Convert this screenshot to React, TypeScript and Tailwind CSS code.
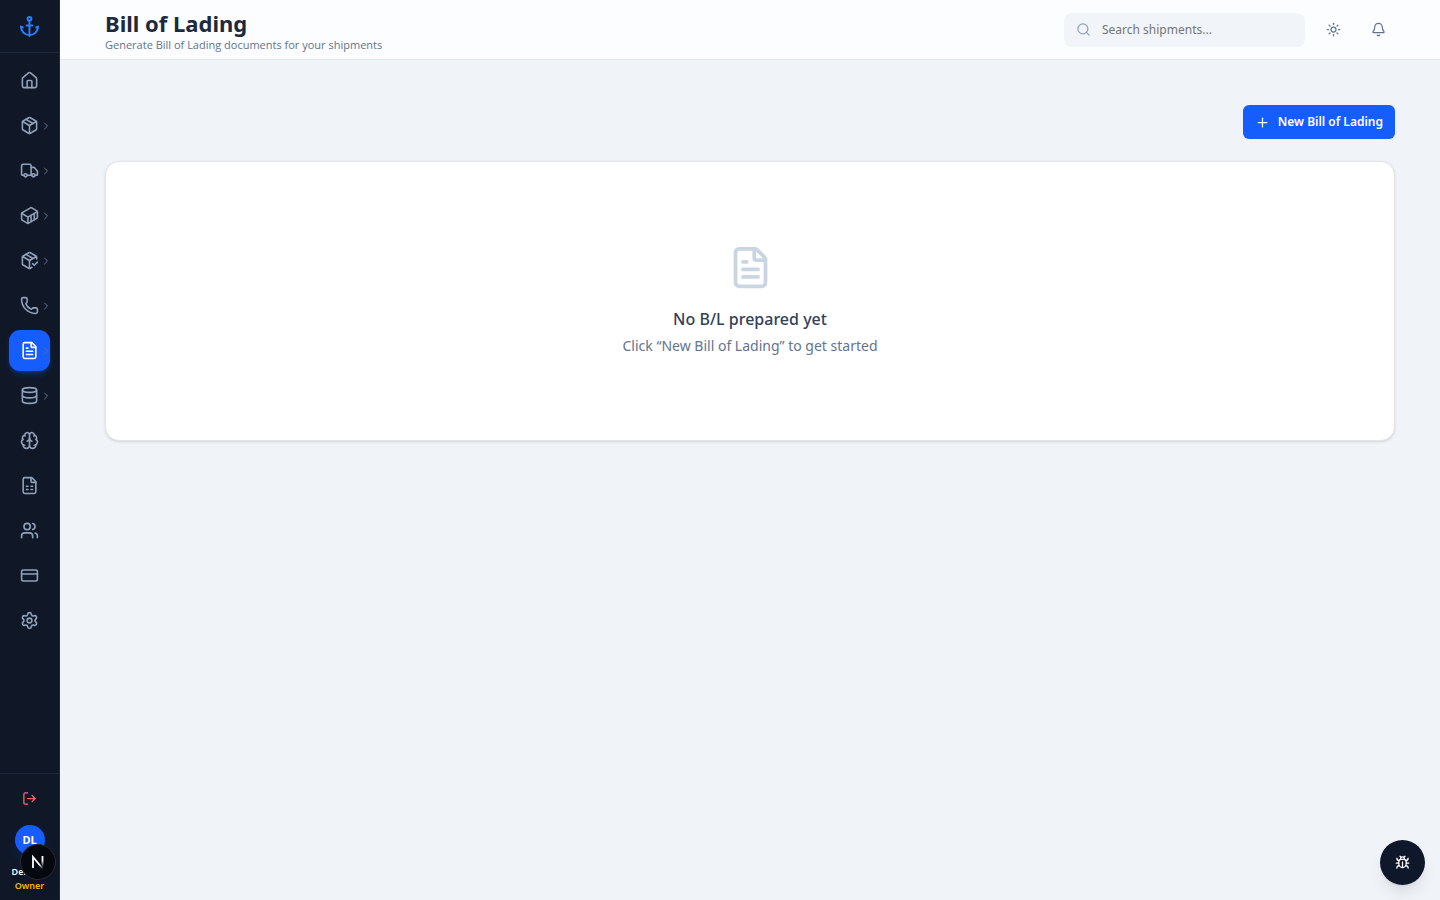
import {
    Anchor, Bell, Brain, Bug, ChevronRight, Container, CreditCard, Database, FileSpreadsheet, FileText, House,
    LogOut, Package, PackageCheck, Phone, Plus, Search, Settings, Sun, Truck, Users, type LucideIcon,
} from "lucide-react";
import React from "react";

interface NavItem {
    label: string;
    icon: LucideIcon;
    hasChildren?: boolean;
    active?: boolean;
}

const navItems: NavItem[] = [
    { label: "Dashboard", icon: House },
    { label: "Shipments", icon: Package, hasChildren: true },
    { label: "Transport", icon: Truck, hasChildren: true },
    { label: "Containers", icon: Container, hasChildren: true },
    { label: "Deliveries", icon: PackageCheck, hasChildren: true },
    { label: "Contacts", icon: Phone, hasChildren: true },
    { label: "Documents", icon: FileText, hasChildren: true, active: true },
    { label: "Master data", icon: Database, hasChildren: true },
    { label: "Assistant", icon: Brain },
    { label: "Reports", icon: FileSpreadsheet },
    { label: "Team", icon: Users },
    { label: "Billing", icon: CreditCard },
    { label: "Settings", icon: Settings },
];

function NavLink({ label, icon: Icon, hasChildren, active }: NavItem) {
    return (
        <a
            href="#"
            aria-label={label}
            aria-current={active ? "page" : undefined}
            className={`relative flex h-[41px] items-center justify-center rounded-[11px] ${active ? "bg-[#155dfc] text-white shadow-md shadow-blue-600/30" : "text-[#90a1b9] hover:bg-slate-800"}`}
        >
            <Icon size={19} />
            {hasChildren && <ChevronRight size={12} className="absolute -right-0.5 text-[#62748e]" />}
        </a>
    );
}

function Sidebar() {
    return (
        <aside className="sticky top-0 flex h-screen w-[60px] shrink-0 flex-col border-r border-[#1d293d] bg-[#101828]">
            <div className="flex h-[53px] items-center justify-center border-b border-[#1d293d] text-[#2b7fff]">
                <Anchor size={23} />
            </div>
            <nav className="flex flex-1 flex-col gap-1 px-[9px] pt-[7px]">
                {navItems.map((item) => (
                    <NavLink key={item.label} {...item} />
                ))}
            </nav>
            <div className="flex flex-col items-center border-t border-[#1d293d] pt-[7px] pb-[7px]">
                <button aria-label="Log out" className="flex h-[34px] w-[41px] items-center justify-center text-[#ff6467]">
                    <LogOut size={15} />
                </button>
                <div className="mt-[10px] flex size-[30px] items-center justify-center rounded-full bg-[#155dfc] text-[11px] font-bold text-white shadow-lg shadow-blue-600/20">
                    DL
                </div>
                <p className="mt-[10px] text-[9px] leading-[14px] font-semibold text-white">Demo Li</p>
                <p className="text-[9px] leading-[14px] font-semibold text-[#ffb900]">Owner</p>
            </div>
        </aside>
    );
}

function Header() {
    return (
        <header className="flex h-[60px] items-center justify-between border-b border-[#e2e8f0] bg-[#fcfdff] px-[45px]">
            <div className="pt-0.5">
                <h1 className="text-[22px] leading-7 font-bold text-[#1d293d]">Bill of Lading</h1>
                <p className="font-['Open_Sans',sans-serif] text-[11px] leading-4 text-[#62748e]">Generate Bill of Lading documents for your shipments</p>
            </div>
            <div className="flex items-center gap-[11px]">
                <label className="flex h-[34px] w-[241px] items-center gap-[11px] rounded-lg bg-[#f1f5f9] px-3">
                    <Search size={15} className="shrink-0 text-[#90a1b9]" />
                    <input
                        type="search"
                        aria-label="Search shipments"
                        placeholder="Search shipments..."
                        className="w-full min-w-0 bg-transparent text-xs outline-none placeholder:text-[#757575]"
                    />
                </label>
                <button aria-label="Toggle theme" className="flex size-[34px] items-center justify-center text-[#62748e]">
                    <Sun size={15} />
                </button>
                <button aria-label="Notifications" className="flex size-[34px] items-center justify-center text-[#62748e]">
                    <Bell size={15} />
                </button>
            </div>
        </header>
    );
}

export default function App() {
    return (
        <div className="flex min-h-screen bg-[#f0f4f9] font-['Noto_Sans',sans-serif]">
            <Sidebar />
            <div className="min-w-0 flex-1">
                <Header />
                <main className="p-[45px]">
                    <div className="flex justify-end">
                        <button className="flex h-[34px] items-center gap-2 rounded-md bg-[#155dfc] px-3 text-xs font-semibold text-white">
                            <Plus size={15} />
                            New Bill of Lading
                        </button>
                    </div>
                    <section className="mt-[22px] flex flex-col items-center rounded-[14px] border border-[#e2e4e9] bg-white px-6 pt-[83px] pb-[83px] text-center shadow-sm">
                        <FileText size={45} className="text-[#cad5e2]" />
                        <h2 className="mt-4 text-base leading-[26px] font-medium text-[#314158]">No B/L prepared yet</h2>
                        <p className="mt-[3px] text-sm leading-[22px] text-[#62748e]">Click “New Bill of Lading” to get started</p>
                    </section>
                </main>
            </div>

            {/* Floating controls */}
            <button
                aria-label="Developer tools"
                className="fixed bottom-5 left-5 flex size-9 items-center justify-center rounded-full border border-[#2b2b2b] bg-[#05080e] shadow-lg"
            >
                <svg width="18" height="18" viewBox="0 0 18 18" fill="none">
                    <defs>
                        <linearGradient id="diag" x1="8" y1="8" x2="14" y2="16" gradientUnits="userSpaceOnUse">
                            <stop offset="0.4" stopColor="#fff" />
                            <stop offset="1" stopColor="#fff" stopOpacity="0" />
                        </linearGradient>
                        <linearGradient id="stem" x1="13" y1="3" x2="13" y2="14" gradientUnits="userSpaceOnUse">
                            <stop offset="0.4" stopColor="#fff" />
                            <stop offset="1" stopColor="#fff" stopOpacity="0" />
                        </linearGradient>
                    </defs>
                    <path d="M4 15V4L14 16" stroke="url(#diag)" strokeWidth="1.8" />
                    <path d="M13.5 3v11" stroke="url(#stem)" strokeWidth="1.8" />
                </svg>
            </button>
            <button
                aria-label="Report a bug"
                className="fixed right-[15px] bottom-[15px] flex size-[45px] items-center justify-center rounded-full bg-[#0f172b] text-white shadow-lg"
            >
                <Bug size={15} />
            </button>
        </div>
    );
}
